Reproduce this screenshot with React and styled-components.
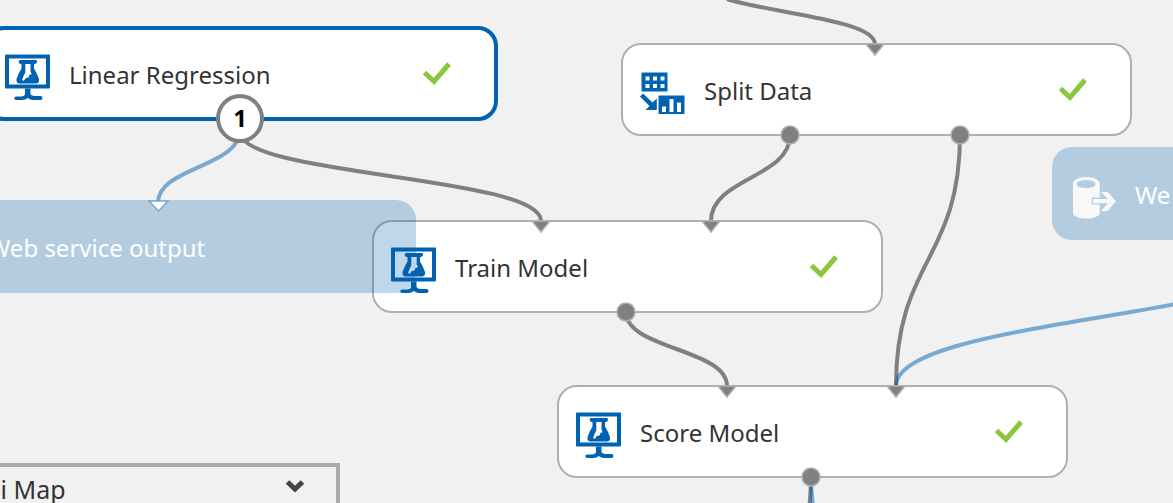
import React from "react";
import styled, { createGlobalStyle } from "styled-components";

const BLUE = "#0062b1";
const GRAY = "#808080";
const LIGHT = "#b0b0b0";
const LINK = "rgba(0, 97, 177, 0.5)";

const GlobalStyle = createGlobalStyle`
  body {
    margin: 0;
    background: #f1f1f1;
    font-family: "Noto Sans", "Open Sans", sans-serif;
  }
`;

const Canvas = styled.main`
  position: relative;
  min-height: 100vh;
  overflow: hidden;
  background: #f1f1f1;
`;

const Node = styled.article`
  position: absolute;
  left: ${(p) => p.$x}px;
  top: ${(p) => p.$y}px;
  box-sizing: border-box;
  width: 511px;
  height: 93px;
  display: flex;
  align-items: center;
  gap: 18px;
  padding: 0 43px 0 17px;
  border: 2px solid ${LIGHT};
  border-radius: 20px;
  background: #fff;
  color: #333;
`;

const SelectedNode = styled(Node)`
  width: 514px;
  height: 95px;
  border: 4px solid ${BLUE};
`;

const ServiceNode = styled(Node)`
  border-color: transparent;
  background: rgba(0, 97, 177, 0.25);
  background-clip: border-box;
  background-origin: border-box;
  color: #fff;
`;

const Label = styled.h2`
  flex: 1;
  margin: 0;
  padding-top: 2px;
  font-size: 24px;
  line-height: 32px;
  font-weight: 400;
  white-space: nowrap;
`;

const Icon = styled.svg`
  flex: none;
  width: 46px;
  height: 54px;
`;

const Tick = styled.svg`
  flex: none;
  width: 28px;
  height: 24px;
`;

const Wires = styled.svg`
  position: absolute;
  left: 0;
  top: 0;
  width: 100%;
  height: 100%;
  overflow: visible;
  pointer-events: none;
`;

const Badge = styled.span`
  position: absolute;
  left: 216px;
  top: 94px;
  box-sizing: border-box;
  width: 48px;
  height: 49px;
  display: flex;
  align-items: center;
  justify-content: center;
  padding-bottom: 2px;
  border: 4px solid ${GRAY};
  border-radius: 50%;
  background: #fff;
  color: #000;
  font-size: 24px;
  line-height: 32px;
  font-weight: 700;
`;

const MiniMap = styled.button`
  position: absolute;
  left: -60px;
  top: 463px;
  box-sizing: border-box;
  width: 400px;
  height: 56px;
  display: flex;
  align-items: center;
  justify-content: space-between;
  padding: 0 31px 4px 12px;
  border: 4px solid #aaa;
  background: #f1f1f1;
  color: #333;
  font-family: inherit;
  font-size: 25px;
  line-height: 32px;
`;

const Chevron = styled.svg`
  width: 20px;
  height: 14px;
  margin-bottom: 6px;
`;

function ModelIcon() {
  return (
    <Icon viewBox="0 0 46 54" aria-hidden="true">
      <g transform="translate(0 7.5)" fill={BLUE}>
        <path fillRule="evenodd" d="M1 0H44Q45 0 45 1V33Q45 34 44 34H1Q0 34 0 33V1Q0 0 1 0ZM4 4V30H41V4Z" />
        <path d="M20 34H25.500V39.500Q26 41 29 41.500H35.500Q37.500 41.500 37.500 43.500Q37.500 45.500 35.500 45.500H28Q25 45.500 22.800 43.500Q20.500 45.500 17.500 45.500H11Q9.300 45.500 9.300 43.800Q9.300 42 11 42H16.500Q20 41 20 39.500Z" />
        <path d="M15 5.500H31Q32 5.500 32 7Q32 9 30.500 9.300L29 9.800V14L31.500 18.500L34 24.500Q34.500 28.600 31.500 29H14Q11 28.600 11.500 24.500L14 18.500L16.500 14V9.800L15 9.300Q13.700 9 13.700 7Q13.700 5.500 15 5.500Z" />
        <path fill="#fff" d="M20.300 9.500H25.500V17L26.800 19.800L24.500 20.300L23.500 23L20.800 23.500L19 26.300L17 25.800L18.300 22L20.300 18Z" />
      </g>
    </Icon>
  );
}

function SplitIcon() {
  return (
    <Icon viewBox="0 0 46 54" aria-hidden="true">
      <g transform="translate(0.5 9.5)" fill={BLUE}>
        <path fillRule="evenodd" d="M1 0H27V19H1ZM5 4V8H9V4ZM12.500 4V8H16.500V4ZM20 4V8H24V4ZM5 11.500V15.500H9V11.500ZM12.500 11.500V15.500H16.500V11.500ZM20 11.500V15.500H24V11.500Z" />
        <path fillRule="evenodd" d="M18 23H44V41.500H18ZM21.500 34V39.500H25.500V34ZM29 26.500V39.500H33V26.500ZM36.500 30V39.500H40.500V30Z" />
        <path d="M16.300 26V37.500H5L9 33.500L-0.500 24L2.500 21L12 30Z" />
      </g>
    </Icon>
  );
}

function ServiceIcon() {
  return (
    <Icon viewBox="0 0 46 54" aria-hidden="true">
      <g transform="translate(2 10)" fill="#f8f8f8">
        <path fillRule="evenodd" d="M0 7C0 -2.300 26.700 -2.300 26.700 7V20.500H18.700V27.500H26.700V36C26.700 43.300 0 43.300 0 36ZM3.700 7C3.700 12.500 22.500 12.500 22.500 7C22.500 1.700 3.700 1.700 3.700 7Z" />
        <path d="M20 22H35L28 15H34.500L43 24.200L34.500 34H28L35 26.300H20Z" />
      </g>
    </Icon>
  );
}

function Done() {
  return (
    <Tick viewBox="0 0 28 24" role="img" aria-label="Completed">
      <path d="M1.500 10.500L11 19.500L26 2" fill="none" stroke="#8cc63f" strokeWidth="5" />
    </Tick>
  );
}

const wires = [
  "M727 -1C770 13 875 20 875 44",
  "M240 132C240 176 541 176 541 221",
  "M790 135C790 178 711 178 711 221",
  "M960 135C960 260 896 260 896 386",
  "M626 312C626 349 727 349 727 386",
  "M811 478C811 490 810 500 809 512",
];
const serviceWires = [
  "M240 130C240 167 158 167 158 203",
  "M1307 248C1307 317 896 317 896 386",
  "M811 478C811 490 812 500 814 512",
];
const inputs = [[875, 44], [541, 221], [711, 221], [727, 386], [896, 386]];
const outputs = [[790, 135], [960, 135], [626, 312], [811, 477]];

export default function App() {
  return (
    <Canvas>
      <GlobalStyle />
      <Wires aria-hidden="true" fill="none" strokeWidth="4">
        {wires.map((d) => <path key={d} d={d} stroke={GRAY} />)}
        {serviceWires.map((d) => <path key={d} d={d} stroke={LINK} />)}
      </Wires>

      <SelectedNode $x={-16} $y={26}>
        <ModelIcon />
        <Label>Linear Regression</Label>
        <Done />
      </SelectedNode>
      <Node $x={621} $y={43}>
        <SplitIcon />
        <Label>Split Data</Label>
        <Done />
      </Node>
      <Node $x={372} $y={220}>
        <ModelIcon />
        <Label>Train Model</Label>
        <Done />
      </Node>
      <Node $x={557} $y={385}>
        <ModelIcon />
        <Label>Score Model</Label>
        <Done />
      </Node>
      <ServiceNode $x={-95} $y={200}>
        <ServiceIcon />
        <Label>Web service output</Label>
      </ServiceNode>
      <ServiceNode $x={1052} $y={147}>
        <ServiceIcon />
        <Label>We</Label>
      </ServiceNode>

      <Wires aria-hidden="true">
        {inputs.map(([x, y]) => (
          <path key={x} d={`M${x - 9} ${y}H${x + 9}L${x} ${y + 11}Z`} fill={GRAY} stroke={LIGHT} strokeWidth="1.5" />
        ))}
        {outputs.map(([x, y]) => (
          <circle key={x} cx={x} cy={y} r="9" fill={GRAY} stroke={LIGHT} strokeWidth="1.5" />
        ))}
        <path d="M149 201H168L158.500 211Z" fill="#fff" stroke="#78a9d1" strokeWidth="1.5" />
      </Wires>
      <Badge>1</Badge>

      <MiniMap type="button">
        Mini Map
        <Chevron viewBox="0 0 20 14" aria-hidden="true">
          <path d="M2.500 3L10 10L17.500 3" fill="none" stroke="#444" strokeWidth="5" />
        </Chevron>
      </MiniMap>
    </Canvas>
  );
}
